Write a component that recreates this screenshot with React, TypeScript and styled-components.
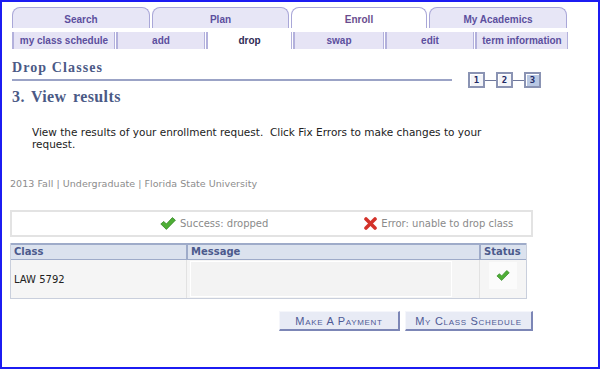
import React from "react";
import styled, { createGlobalStyle } from "styled-components";

const GlobalStyle = createGlobalStyle`
  html, body {
    margin: 0;
    padding: 0;
    background: #ffffff;
  }
  body {
    font-family: "DejaVu Sans", Verdana, sans-serif;
  }
`;

const Frame = styled.div`
  width: 600px;
  height: 369px;
  box-sizing: border-box;
  border: 2px solid #1c1cf2;
  padding: 5px 0 0 8px;
  overflow: hidden;
`;

const TabBar = styled.div`
  display: flex;
  gap: 2px;
  margin-left: 2px;
  height: 21px;
`;

const Tab = styled.div<{ $active?: boolean; $w: number }>`
  box-sizing: border-box;
  width: ${(p) => p.$w}px;
  border: 1px solid #a9a7d8;
  border-bottom: none;
  border-radius: 8px 8px 0 0;
  background: ${(p) => (p.$active ? "#ffffff" : "#e7e6f6")};
  color: ${(p) => (p.$active ? "#6a4c8e" : "#5c4f9e")};
  font: bold 10px "Liberation Sans", Arial, sans-serif;
  display: flex;
  align-items: center;
  justify-content: center;
  padding-top: 2px;
`;

const SubBar = styled.div`
  display: flex;
  margin: 4px 0 0 2px;
  height: 17px;
`;

const SubTab = styled.div<{ $active?: boolean; $w: number }>`
  box-sizing: border-box;
  width: ${(p) => p.$w}px;
  margin-right: 1px;
  border-left: 2px solid #b3b1dc;
  border-right: 1px solid #b3b1dc;
  background: ${(p) => (p.$active ? "#ffffff" : "#e6e4f5")};
  color: ${(p) => (p.$active ? "#2f2b55" : "#5c4f9e")};
  font: bold 10px "Liberation Sans", Arial, sans-serif;
  display: flex;
  align-items: center;
  justify-content: center;
`;

const HeadRow = styled.div`
  display: flex;
  align-items: flex-start;
  margin: 11px 0 0 2px;
`;

const PageTitle = styled.div`
  flex: 0 0 440px;
  font: bold 14px/16px "Liberation Serif", Georgia, serif;
  letter-spacing: 1.1px;
  color: #4b5a86;
  padding-bottom: 3px;
  border-bottom: 2px solid #9ba3c6;
`;

const Steps = styled.div`
  display: flex;
  align-items: center;
  margin: 12px 0 0 16px;
`;

const StepBox = styled.div<{ $current?: boolean }>`
  box-sizing: border-box;
  width: 17px;
  height: 16px;
  border: 2px solid #8a93b3;
  box-shadow: inset 1px 1px 0 #ffffff;
  background: ${(p) => (p.$current ? "#b9c8e3" : "#f3f4f8")};
  color: #1f2a66;
  font: bold 9px/12px "DejaVu Sans Mono", monospace;
  text-align: center;
`;

const StepLink = styled.div`
  width: 11px;
  height: 1px;
  background: #6f789b;
`;

const StepTitle = styled.h2`
  margin: 0 0 0 2px;
  font: bold 16px/18px "Liberation Serif", Georgia, serif;
  letter-spacing: 0.4px;
  color: #4b5a86;
  word-spacing: 2px;
`;

const Intro = styled.p`
  margin: 20px 0 0 22px;
  width: 480px;
  font-size: 10.5px;
  line-height: 12px;
  letter-spacing: 0px;
  color: #222222;
`;

const Term = styled.div`
  margin-top: 28px;
  font-size: 9.5px;
  line-height: 12px;
  letter-spacing: 0.05px;
  color: #8c8c8c;
`;

const Notice = styled.div`
  box-sizing: border-box;
  width: 523px;
  height: 27px;
  margin-top: 20px;
  border: 2px solid #e3e3e3;
  display: flex;
  align-items: center;
  padding-left: 148px;
  gap: 96px;
`;

const NoticeItem = styled.span`
  display: flex;
  align-items: center;
  gap: 4px;
  font-size: 10px;
  color: #8a8a8a;
`;

const Grid = styled.div`
  width: 515px;
  margin-top: 6px;
  border: 1px solid #c9cfdc;
  border-top: none;
`;

const GridRow = styled.div<{ $head?: boolean }>`
  display: grid;
  grid-template-columns: 175px 293px 1fr;
  height: ${(p) => (p.$head ? "17px" : "38px")};
  box-sizing: border-box;
  background: ${(p) => (p.$head ? "#dbe2ee" : "#f5f5f5")};
  border-top: ${(p) => (p.$head ? "2px solid #9eabc9" : "none")};
  border-bottom: ${(p) => (p.$head ? "1px solid #9eabc9" : "none")};
`;

const HeadCell = styled.div`
  font-size: 10px;
  font-weight: bold;
  color: #4b5a8c;
  padding: 1px 0 0 3px;
  border-left: 2px solid #9eabc9;
  &:first-child {
    border-left: none;
  }
`;

const Cell = styled.div<{ $center?: boolean }>`
  display: flex;
  align-items: center;
  justify-content: ${(p) => (p.$center ? "center" : "flex-start")};
  padding-left: ${(p) => (p.$center ? "0" : "3px")};
  font-size: 10px;
  color: #222222;
  border-left: 1px solid #e2e2e2;
  &:first-child {
    border-left: none;
  }
`;

const MsgBox = styled.div`
  width: 260px;
  height: 34px;
  background: #f3f3f3;
  border: 1px solid #ffffff;
`;

const StatusBox = styled.div`
  width: 28px;
  height: 27px;
  margin-top: -8px;
  background: #fbfbfb;
  display: flex;
  align-items: center;
  justify-content: center;
`;

const Actions = styled.div`
  display: flex;
  justify-content: flex-end;
  gap: 5px;
  width: 523px;
  margin-top: 12px;
`;

const Button = styled.button<{ $w: number }>`
  box-sizing: border-box;
  width: ${(p) => p.$w}px;
  height: 20px;
  padding: 0;
  background: #e8ebf5;
  border: 1px solid #f5f6fb;
  border-right: 2px solid #7c86b6;
  border-bottom: 2px solid #7c86b6;
  color: #4f5a95;
  font: 11px "Liberation Sans", Arial, sans-serif;
  font-variant: small-caps;
  letter-spacing: 0.7px;
  cursor: pointer;
`;

const Check = ({ size = 16 }: { size?: number }) => (
  <svg width={size} height={Math.round(size * 0.8)} viewBox="0 0 16 13">
    <polygon
      points="0.8,7 3.8,4.4 6.4,7 12.4,0.6 15.4,3.2 6.4,12.4"
      fill="#4eae35"
      stroke="#36892a"
      strokeWidth="0.8"
      strokeLinejoin="round"
    />
  </svg>
);

const Cross = () => (
  <svg width="13" height="13" viewBox="0 0 13 13">
    <g stroke="#d3322a" strokeWidth="3.6" strokeLinecap="round">
      <line x1="2" y1="2" x2="11" y2="11" />
      <line x1="11" y1="2" x2="2" y2="11" />
    </g>
  </svg>
);

const tabs = [
  { label: "Search", w: 138 },
  { label: "Plan", w: 137 },
  { label: "Enroll", w: 136, active: true },
  { label: "My Academics", w: 138 },
];

const subTabs = [
  { label: "my class schedule", w: 103 },
  { label: "add", w: 89 },
  { label: "drop", w: 86, active: true },
  { label: "swap", w: 91 },
  { label: "edit", w: 89 },
  { label: "term information", w: 93 },
];

export default function App() {
  return (
    <>
      <GlobalStyle />
      <Frame>
        <TabBar>
          {tabs.map((t) => (
            <Tab key={t.label} $w={t.w} $active={t.active}>
              {t.label}
            </Tab>
          ))}
        </TabBar>
        <SubBar>
          {subTabs.map((t) => (
            <SubTab key={t.label} $w={t.w} $active={t.active}>
              {t.label}
            </SubTab>
          ))}
        </SubBar>

        <HeadRow>
          <PageTitle>Drop Classes</PageTitle>
          <Steps>
            <StepBox>1</StepBox>
            <StepLink />
            <StepBox>2</StepBox>
            <StepLink />
            <StepBox $current>3</StepBox>
          </Steps>
        </HeadRow>
        <StepTitle>3. View results</StepTitle>

        <Intro>
          View the results of your enrollment request.&nbsp; Click Fix Errors to make changes to your
          request.
        </Intro>

        <Term>2013 Fall | Undergraduate | Florida State University</Term>

        <Notice>
          <NoticeItem>
            <Check />
            Success: dropped
          </NoticeItem>
          <NoticeItem>
            <Cross />
            Error: unable to drop class
          </NoticeItem>
        </Notice>

        <Grid>
          <GridRow $head>
            <HeadCell>Class</HeadCell>
            <HeadCell>Message</HeadCell>
            <HeadCell>Status</HeadCell>
          </GridRow>
          <GridRow>
            <Cell>LAW 5792</Cell>
            <Cell>
              <MsgBox />
            </Cell>
            <Cell $center>
              <StatusBox>
                <Check size={14} />
              </StatusBox>
            </Cell>
          </GridRow>
        </Grid>

        <Actions>
          <Button $w={121}>Make A Payment</Button>
          <Button $w={128}>My Class Schedule</Button>
        </Actions>
      </Frame>
    </>
  );
}
